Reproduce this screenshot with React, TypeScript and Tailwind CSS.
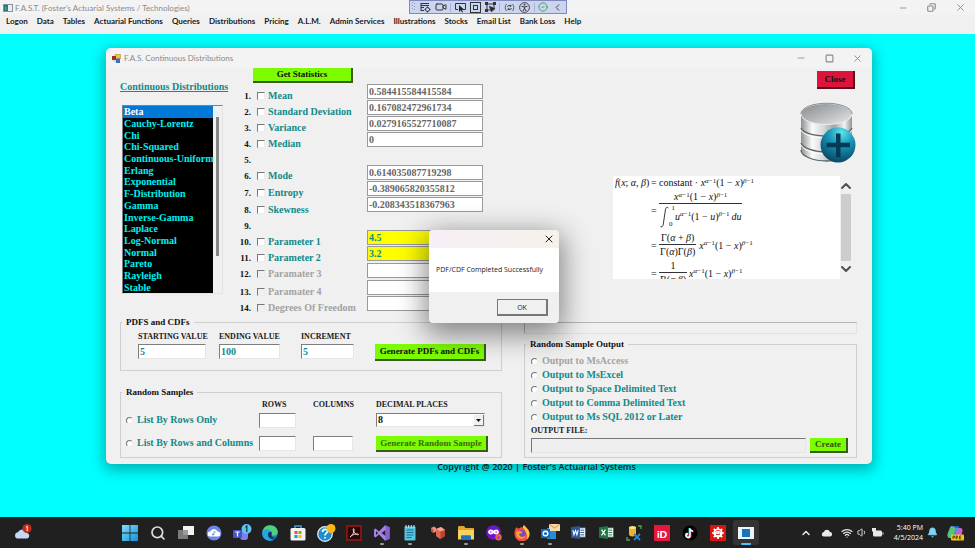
import React from "react";
import {
  Bell,
  ChevronLeft,
  ChevronUp,
  ChevronDown,
  CircleCheck,
  Copy,
  Minus,
  MousePointer2,
  Search,
  Square,
  Video,
  Volume1,
  Wifi,
  X,
} from "lucide-react";

const menuItems = [
  "Logon",
  "Data",
  "Tables",
  "Actuarial Functions",
  "Queries",
  "Distributions",
  "Pricing",
  "A.L.M.",
  "Admin Services",
  "Illustrations",
  "Stocks",
  "Email List",
  "Bank Loss",
  "Help",
];

const distributions = [
  "Beta",
  "Cauchy-Lorentz",
  "Chi",
  "Chi-Squared",
  "Continuous-Uniform",
  "Erlang",
  "Exponential",
  "F-Distribution",
  "Gamma",
  "Inverse-Gamma",
  "Laplace",
  "Log-Normal",
  "Normal",
  "Pareto",
  "Rayleigh",
  "Stable",
];

type Stat = { label?: string; value?: string; kind?: "result" | "param" | "off" };

const stats: Stat[] = [
  { label: "Mean", value: "0.584415584415584", kind: "result" },
  { label: "Standard Deviation", value: "0.167082472961734", kind: "result" },
  { label: "Variance", value: "0.0279165527710087", kind: "result" },
  { label: "Median", value: "0", kind: "result" },
  {},
  { label: "Mode", value: "0.614035087719298", kind: "result" },
  { label: "Entropy", value: "-0.389065820355812", kind: "result" },
  { label: "Skewness", value: "-0.208343518367963", kind: "result" },
  {},
  { label: "Parameter 1", value: "4.5", kind: "param" },
  { label: "Parameter 2", value: "3.2", kind: "param" },
  { label: "Paramater 3", value: "", kind: "off" },
  { label: "Paramater 4", value: "", kind: "off" },
  { label: "Degrees Of Freedom", value: "", kind: "off" },
];

const outputs = [
  "Output to MsAccess",
  "Output to MsExcel",
  "Output to Space Delimited Text",
  "Output to Comma Delimited Text",
  "Output to Ms SQL 2012 or Later",
];

const serif = "font-['Liberation_Serif',serif] font-bold";
const sans = "font-['Open_Sans',sans-serif]";
const chrome = "font-['Lato','Open_Sans',sans-serif]";
const raised = "border-r-2 border-b-2 border-[#3d5a1e] bg-[#7cfc00]";
const sunken =
  "border border-t-[#7d7d7d] border-l-[#7d7d7d] border-r-[#e6e6e6] border-b-[#e6e6e6] bg-white";
const caption = "text-[8px] leading-[10px] whitespace-nowrap text-[#1a1a1a]";

function Radio({ id, name, label, disabled }: { id: string; name: string; label: string; disabled?: boolean }) {
  return (
    <div className="flex h-[14px] items-center gap-[4px]">
      <input
        id={id}
        type="radio"
        name={name}
        disabled={disabled}
        className="size-[7px] shrink-0 appearance-none rounded-full border border-t-[#777] border-l-[#777] border-r-[#eee] border-b-[#eee] bg-white"
      />
      <label
        htmlFor={id}
        className={`text-[10px] leading-[14px] whitespace-nowrap ${disabled ? "text-[#a3a3a3]" : "text-[#108a8a]"}`}
      >
        {label}
      </label>
    </div>
  );
}

function AppGlyph() {
  return (
    <svg viewBox="0 0 10 8" className="h-[8px] w-[10px]" aria-hidden="true">
      <rect x=".5" y=".5" width="9" height="7" fill="#e9eef0" stroke="#8b9296" />
      <rect x="1" y="1" width="4" height="6" fill="#2b6f86" />
      <rect x="2" y="2.500" width="2" height="3.500" fill="#38a86b" />
    </svg>
  );
}

function FormGlyph() {
  return (
    <svg viewBox="0 0 9 9" className="size-[9px]" aria-hidden="true">
      <rect x="3" y="0.300" width="5.500" height="4.700" fill="#f3c437" stroke="#b28a2b" strokeWidth=".5" />
      <rect x="0" y="2" width="4" height="4" fill="#a42b2b" />
      <rect x="4" y="4.500" width="4" height="4.500" fill="#3d6ec9" />
      <rect x="1" y="6" width="3" height="2" fill="#d9d9d9" />
    </svg>
  );
}

function DatabaseArt() {
  return (
    <svg viewBox="0 0 56 62" className="h-[62px] w-[56px]" role="img" aria-label="Add database">
      <defs>
        <linearGradient id="metal" x1="0" x2="1">
          <stop offset="0" stopColor="#8d9191" />
          <stop offset=".22" stopColor="#fafbfb" />
          <stop offset=".45" stopColor="#d2d6d6" />
          <stop offset=".65" stopColor="#9fa5a5" />
          <stop offset=".85" stopColor="#f2f4f4" />
          <stop offset="1" stopColor="#8f9595" />
        </linearGradient>
        <linearGradient id="lid" x1="0" x2="1" y1="0" y2="1">
          <stop offset="0" stopColor="#85898c" />
          <stop offset="1" stopColor="#e6e8e9" />
        </linearGradient>
        <radialGradient id="orb" cx=".6" cy=".15" r=".9">
          <stop offset="0" stopColor="#5fe3ee" />
          <stop offset=".4" stopColor="#1a98b8" />
          <stop offset="1" stopColor="#05405f" />
        </radialGradient>
      </defs>
      <path d="M1 11v37c0 6 12 11 26 11s25-5 25-11V11z" fill="url(#metal)" />
      <path d="M1 26c2 5 13 8 26 8s23-3 25-8M1 41c2 5 13 9 26 9s23-4 25-9M1 48c0 6 12 11 26 11s25-5 25-11" fill="none" stroke="#5e6467" strokeWidth="1.300" />
      <path d="M1 28c2 5 13 8 26 8s23-3 25-8M1 43c2 5 13 9 26 9s23-4 25-9" fill="none" stroke="#fff" strokeWidth="1" />
      <ellipse cx="26.500" cy="12" rx="25.500" ry="10.500" fill="url(#lid)" stroke="#eceeee" strokeWidth="1" />
      <path d="M1 12C1 6 12 1.300 26.500 1.300S52 6 52 12" fill="none" stroke="#6d7274" strokeWidth=".8" />
      <circle cx="38" cy="43" r="17.500" fill="url(#orb)" />
      <path d="M36 31.500h4.500v9.200H50v4.600h-9.500v10H36v-10h-9.500v-4.600H36z" fill="#063b56" />
    </svg>
  );
}

function Beta({ v = "x" }: { v?: string }) {
  return (
    <span className="whitespace-nowrap">
      <i>{v}</i>
      <sup className="text-[7px]"><i>α</i>−1</sup>(1 − <i>{v}</i>)<sup className="text-[7px]"><i>β</i>−1</sup>
    </span>
  );
}

function Fraction({ top, bottom }: { top: React.ReactNode; bottom: React.ReactNode }) {
  return (
    <span className="inline-flex flex-col items-center">
      <span className="px-[2px] leading-[12px]">{top}</span>
      <span className="flex items-center justify-center self-stretch border-t border-[#333] px-[1px] leading-[13px]">{bottom}</span>
    </span>
  );
}

function Formula() {
  return (
    <div className="flex h-[103px]">
      <div className="grid min-w-0 flex-1 grid-cols-[34px_6px_1fr] content-start items-center gap-x-[2px] overflow-hidden bg-white pl-[2px] font-['Liberation_Serif',serif] text-[10px] leading-[13px] font-normal text-[#111]">
        <span className="whitespace-nowrap"><i>f</i>(<i>x</i>; <i>α</i>, <i>β</i>)</span>
        <span>=</span>
        <span className="whitespace-nowrap">constant · <Beta /></span>
        <span className="col-start-2">=</span>
        <span className="flex h-[42px] items-start pt-[2px]">
          <Fraction
            top={<Beta />}
            bottom={
              <span className="flex items-center">
                <svg viewBox="0 0 9 22" className="mt-[2px] h-[22px] w-[9px]" aria-hidden="true">
                  <path d="M8.300 2.200C7.500.6 6 .8 5.400 4L3.300 18c-.5 3.200-2 3.700-2.800 2" fill="none" stroke="#222" strokeWidth=".9" />
                </svg>
                <span className="flex h-[24px] w-[6px] flex-col justify-between text-[7px] leading-[8px]">
                  <span className="text-right">1</span>
                  <span>0</span>
                </span>
                <Beta v="u" />
                <i className="ml-[2px]">du</i>
              </span>
            }
          />
        </span>
        <span className="col-start-2">=</span>
        <span className="flex h-[28px] items-center gap-[3px]">
          <Fraction top={<>Γ(<i>α</i> + <i>β</i>)</>} bottom={<>Γ(<i>α</i>)Γ(<i>β</i>)</>} />
          <Beta />
        </span>
        <span className="col-start-2">=</span>
        <span className="flex h-[28px] items-center gap-[2px]">
          <Fraction top="1" bottom={<>B(<i>α</i>, <i>β</i>)</>} />
          <Beta />
        </span>
      </div>
      <div className="flex w-[12px] flex-col items-center justify-between py-[2px] text-[#505050]">
        <ChevronUp size={16} strokeWidth={3} className="shrink-0" />
        <div className="w-[10px] flex-1 bg-[#cdcdcd]" />
        <ChevronDown size={16} strokeWidth={3} className="shrink-0" />
      </div>
    </div>
  );
}

function DebugToolbar() {
  const sep = <span className="h-[9px] w-px bg-[#a9b1d6]" />;
  return (
    <div className="absolute top-0 left-[409px] flex h-[14px] w-[158px] items-center justify-between border border-[#7f89bd] bg-[#ccd5f0] pr-[3px] pl-[2px] text-[#333]">
      <svg viewBox="0 0 4 10" className="h-[10px] w-[4px]" fill="#8d95b8" aria-hidden="true">
        <path d="M0 0h1v1H0zM2 1h1v1H2zM0 3h1v1H0zM2 4h1v1H2zM0 6h1v1H0zM2 7h1v1H2z" />
      </svg>
      <svg viewBox="0 0 11 11" className="size-[11px]" fill="none" stroke="#333" aria-hidden="true">
        <path d="M1 1.500h8M1 3.500h8M1 5.500h3M1 8.500h3M1 1v8" />
        <circle cx="7.500" cy="7.500" r="2" />
        <path d="M7.500 4.500v1M7.500 9.500v1M4.500 7.500h1M9.500 7.500h1" />
      </svg>
      <Video size={12} strokeWidth={2} />
      {sep}
      <svg viewBox="0 0 11 11" className="size-[11px]" aria-hidden="true">
        <path d="M3 7.500H.5v-6h10v6H8" fill="none" stroke="#333" />
        <path d="M4 3v7l1.800-1.800L7 10.500l1-.6-1.100-2L9 7.500z" fill="#222" />
      </svg>
      <svg viewBox="0 0 11 11" className="size-[11px]" fill="none" stroke="#333" aria-hidden="true">
        <rect x=".5" y=".5" width="10" height="10" />
        <rect x="3.500" y="3.500" width="4" height="4" />
      </svg>
      <span className="relative">
        <svg viewBox="0 0 11 11" className="size-[11px]" fill="none" stroke="#333" aria-hidden="true">
          <path d="M2 2h7M2 2v6M9 2v6M2 8h7" />
          <path d="M0 0h3v3H0zM8 0h3v3H8zM0 7h3v3H0z" fill="#333" stroke="none" />
        </svg>
        <MousePointer2 size={8} className="absolute top-[3px] left-[3px]" fill="#222" />
      </span>
      {sep}
      <svg viewBox="0 0 11 11" className="size-[11px]" fill="none" stroke="#444" aria-hidden="true">
        <path d="M2.500 2C.8 4 .8 7 2.500 9M8.500 2c1.700 2 1.700 5 0 7" strokeWidth=".8" />
        <path d="M3.500 5a2 2 0 0 1 3.500-1M7.500 6A2 2 0 0 1 4 7M7 2.800V4.300H5.500M4 8.200V6.700h1.500" strokeWidth=".9" />
      </svg>
      <svg viewBox="0 0 11 11" className="size-[11px]" fill="none" stroke="#333" aria-hidden="true">
        <circle cx="5.500" cy="5.500" r="4.900" strokeWidth=".9" />
        <circle cx="5.500" cy="2.700" r=".9" fill="#333" stroke="none" />
        <path d="M2.500 4.300l3 .7 3-.7M5.500 5v1.500M4 9l1.500-2.800L7 9" strokeWidth="1" />
      </svg>
      {sep}
      <CircleCheck size={10} className="text-[#2f9e3d]" />
      <ChevronLeft size={11} />
    </div>
  );
}

const tile = "size-[16px]";

const apps: { name: string; running?: boolean; active?: boolean; art: React.ReactNode }[] = [
  {
    name: "Start",
    art: (
      <svg viewBox="0 0 16 16" className={tile}>
        <defs>
          <linearGradient id="start" x1="0" y1="0" x2="1" y2="1">
            <stop offset="0" stopColor="#7fdcfb" />
            <stop offset="1" stopColor="#1492dc" />
          </linearGradient>
        </defs>
        <path d="M0 0h7.600v7.600H0zM8.400 0H16v7.600H8.400zM0 8.400h7.600V16H0zM8.400 8.400H16V16H8.400z" fill="url(#start)" />
      </svg>
    ),
  },
  { name: "Search", art: <Search size={16} strokeWidth={2.5} className="text-[#dedede]" /> },
  {
    name: "Task View",
    art: (
      <svg viewBox="0 0 16 16" className={tile}>
        <path d="M5 1h11v9H5z" fill="#f1f1f1" />
        <path d="M0 5h10v9H0z" fill="#8c8c8c" fillOpacity=".85" />
      </svg>
    ),
  },
  {
    name: "Cloud Music",
    art: (
      <svg viewBox="0 0 16 16" className={tile}>
        <circle cx="8" cy="8" r="7.500" fill="#6a86e6" />
        <path d="M4 11.500a2.500 2.500 0 0 1 .3-5 3.800 3.800 0 0 1 7.200 0 2.500 2.500 0 0 1 .5 5z" fill="#fff" />
        <circle cx="7" cy="9.500" r="1" fill="#6a86e6" />
        <path d="M8 9.500v-3l1.500.5" fill="none" stroke="#6a86e6" strokeWidth=".8" />
      </svg>
    ),
  },
  {
    name: "Teams",
    art: (
      <svg viewBox="0 0 19 17" className="h-[17px] w-[19px]">
        <rect x="7" y="7" width="8" height="9" rx="3" fill="#7b83eb" />
        <circle cx="13.500" cy="5" r="5" fill="#5cc3f2" />
        <path d="M12.500 3.200 13.800 2v6" fill="none" stroke="#1d2a3a" strokeWidth="1.200" />
        <rect x="0" y="6" width="9" height="8" rx="1" fill="#4a55c4" />
        <path d="M2.300 8h4.400M4.500 8v4.500" stroke="#fff" strokeWidth="1.200" />
      </svg>
    ),
  },
  {
    name: "Edge",
    art: (
      <svg viewBox="0 0 16 16" className={tile}>
        <circle cx="8" cy="8" r="7.800" fill="#1477c9" />
        <path d="M.3 7.500C1 3 4 .2 8 .2c5 0 8 3.600 7.800 6.800-.1 2.500-2 3.800-4 3.800-1.800 0-2.400-.8-1.900-1.700C11 6.500 6 2.800.3 7.500z" fill="#4fd07c" />
        <path d="M.3 7.500C2 3 8 3.500 9.500 7 6.500 6 5 9 6.500 12c1 2 3.500 3 6 2.500C5 18-.8 13 .3 7.500z" fill="#2aa4dc" />
        <path d="M9.500 7C6.500 6.400 5.400 9 6.500 11.500c1.400 2.700 5 3.200 7.600 1.300-2.500.6-5.300-.6-4.700-3z" fill="#12355c" />
      </svg>
    ),
  },
  {
    name: "Store",
    art: (
      <svg viewBox="0 0 16 16" className={tile}>
        <path d="M5 4V1h6v3" fill="none" stroke="#3aa0e0" strokeWidth="1.500" />
        <rect x=".5" y="3" width="15" height="12.500" rx="1.500" fill="#f3f3f3" />
        <path d="M4.500 6h3v3h-3z" fill="#f25022" />
        <path d="M8.500 6h3v3h-3z" fill="#7fba00" />
        <path d="M4.500 10h3v3h-3z" fill="#00a4ef" />
        <path d="M8.500 10h3v3h-3z" fill="#ffb900" />
      </svg>
    ),
  },
  {
    name: "Get Help",
    art: (
      <svg viewBox="0 0 19 18" className="h-[18px] w-[19px]">
        <circle cx="8" cy="10" r="7.300" fill="#1e8fd0" stroke="#e9f4fa" strokeWidth="1.200" />
        <path d="M5.500 8c0-3.500 5-3.300 5-.6C10.500 9.200 8 9.300 8 11.500M8 13v1.600" fill="none" stroke="#fff" strokeWidth="1.700" />
        <circle cx="14" cy="4.500" r="4.500" fill="#fdb913" />
      </svg>
    ),
  },
  {
    name: "Acrobat",
    art: (
      <svg viewBox="0 0 16 16" className={tile}>
        <rect x="1" y="1" width="14" height="14" fill="#2b0606" stroke="#a01515" strokeWidth="1.500" />
        <path d="M4 12c1-.5 4.500-4 4-8-.5-1-1.200 0-.5 2C8.500 9 12 10.500 12.500 9.500S7 8.500 4 12z" fill="none" stroke="#f4eaea" strokeWidth=".9" />
      </svg>
    ),
  },
  {
    name: "Visual Studio",
    running: true,
    art: (
      <svg viewBox="0 0 16 16" className={tile}>
        <path d="M1.500 3.500 0 4.500v7l1.500 1L5 9.400l6 6.400 4.500-2V2.200L11 .2 5 6.600zM2 6l2 2-2 2zM11.500 5v6L7.500 8z" fill="#a583e8" fillRule="evenodd" />
        <path d="M11.500.4 15.500 2.200v11.600l-4 1.800z" fill="#8560d0" />
      </svg>
    ),
  },
  {
    name: "Notepad",
    running: true,
    art: (
      <svg viewBox="0 0 16 16" className={tile}>
        <rect x="2.500" y="1.500" width="11" height="14" rx="1" fill="#59c2e0" />
        <path d="M4.500 5h7M4.500 7.500h7M4.500 10h7M4.500 12.500h5" stroke="#1c6f90" strokeWidth="1" />
        <path d="M4 0v3M6.700 0v3M9.300 0v3M12 0v3" stroke="#cfeef7" strokeWidth="1" />
      </svg>
    ),
  },
  {
    name: "Package",
    art: (
      <svg viewBox="0 0 16 16" className={tile}>
        <path d="m6 4 5-2 4 3v6l-5 3-4-3z" fill="#e2674f" />
        <path d="m6 4 4.500 2.500L15 5l-4-3z" fill="#f5a48f" />
        <path d="M10.500 6.500V14l4.500-3V5z" fill="#b94432" />
        <path d="m1 3 3-1.500L6 3v3.500L3.500 8 1 6z" fill="#ef937c" />
        <path d="M3.500 4.500V8L1 6V3z" fill="#c75340" />
      </svg>
    ),
  },
  {
    name: "File Explorer",
    running: true,
    art: (
      <svg viewBox="0 0 16 16" className={tile}>
        <path d="M0 2.500C0 1.500.5 1 1.500 1H6l1.500 2H15c.7 0 1 .4 1 1v10H0z" fill="#e5a52a" />
        <path d="M0 5h16v9.500H0z" fill="#fbd35c" />
        <path d="M3 15v-3.500c0-.8.500-1.200 1.200-1.200h7.600c.7 0 1.200.4 1.200 1.200V15z" fill="#1b74c9" />
      </svg>
    ),
  },
  {
    name: "Firefox Private",
    art: (
      <svg viewBox="0 0 16 16" className={tile}>
        <circle cx="7.500" cy="7.500" r="7.300" fill="#7414c9" />
        <path d="M3 7c0-2 3-2 4.500 0s4.500 2 4.500 0-3-2-4.500 0S3 9 3 7z" fill="none" stroke="#fff" strokeWidth="1.800" />
        <circle cx="12.500" cy="12.200" r="3.200" fill="#f2662b" />
        <circle cx="12.500" cy="12.600" r="1.500" fill="#9a3fd8" />
      </svg>
    ),
  },
  {
    name: "Firefox",
    running: true,
    art: (
      <svg viewBox="0 0 16 16" className={tile}>
        <path d="M1 5c.5-1.500 1-2 1.500-3 .7 1 1.500 1.500 2.500 1.500C6.500 2 8 2 9 2.500 9 1.500 9.500.5 10 0c1 2 5.500 4 5.500 9A7.500 7.500 0 0 1 .5 9C.4 7.500.6 6 1 5z" fill="#f4503b" />
        <path d="M10 0c1 2 5.500 4 5.500 9 0 2-1 4-2.500 5.200C14 9 11 5.500 9 2.500 9 1.500 9.500.5 10 0z" fill="#ffc53a" />
        <circle cx="7.800" cy="9" r="4" fill="#7b45cc" />
        <path d="M2.500 6.500C5 5.500 8 6 8.500 8 7 8 6.500 9 5 9.200 5.500 12 10 13 12 10c0 4-7 5.500-9.200 1.200C2 9.500 2 8 2.500 6.500z" fill="#ff9a2e" />
      </svg>
    ),
  },
  {
    name: "Outlook",
    running: true,
    art: (
      <svg viewBox="0 0 19 17" className="h-[17px] w-[19px]">
        <rect x="6" y="4" width="9" height="11" fill="#2a8ad6" />
        <path d="M8 0h11v7H8z" fill="#f7d9ae" />
        <path d="m8 0 5.500 4L19 0" fill="none" stroke="#d48d3a" strokeWidth="1" />
        <rect x="0" y="5" width="9" height="9" fill="#0f6cbd" />
        <circle cx="4.500" cy="9.500" r="2.300" fill="none" stroke="#fff" strokeWidth="1.400" />
      </svg>
    ),
  },
  {
    name: "Word",
    art: (
      <svg viewBox="0 0 16 16" className="size-[15px]">
        <path d="M8 3h7.500v10H8z" fill="#f0f4fa" stroke="#2b579a" strokeWidth=".8" />
        <path d="M10 5.500h4M10 8h4M10 10.500h4" stroke="#2b579a" />
        <path d="M0 2.500 9.500 1v14L0 13.500z" fill="#2b579a" />
        <path d="m2 5.500 1.200 5L4.800 6l1.500 4.500 1.300-5" fill="none" stroke="#fff" strokeWidth="1.200" />
      </svg>
    ),
  },
  {
    name: "Excel",
    art: (
      <svg viewBox="0 0 16 16" className="size-[15px]">
        <path d="M8 3h7.500v10H8z" fill="#f0faf4" stroke="#217346" strokeWidth=".8" />
        <path d="M10 5.500h4M10 8h4M10 10.500h4" stroke="#217346" />
        <path d="M0 2.500 9.500 1v14L0 13.500z" fill="#217346" />
        <path d="m2.700 5 4.200 6M6.900 5l-4.200 6" stroke="#fff" strokeWidth="1.300" />
      </svg>
    ),
  },
  {
    name: "SQL Tools",
    art: (
      <svg viewBox="0 0 16 16" className={tile}>
        <path d="M3 2.500v7c0 2.500 7 2.500 7 0v-7z" fill="#f0b429" />
        <ellipse cx="6.500" cy="2.500" rx="3.500" ry="1.500" fill="#ffe08a" />
        <path d="M12 1h3v3M4 15H1v-3" fill="none" stroke="#56a944" strokeWidth="1.300" />
        <path d="m8 9 6 6M14 9l-6 6" stroke="#2d86cf" strokeWidth="1.800" />
      </svg>
    ),
  },
  {
    name: "iD",
    art: (
      <span className="flex size-[16px] items-end justify-center bg-[#e5173f] font-['Lato',sans-serif] text-[10px] leading-[14px] font-black text-white">
        iD
      </span>
    ),
  },
  {
    name: "TikTok",
    art: (
      <svg viewBox="0 0 16 16" className={tile}>
        <circle cx="8" cy="8" r="7.500" fill="#000" />
        <path d="M8 3.500v7a1.900 1.900 0 1 1-2-1.800M8 3.500c.3 1.700 1.300 2.600 3 2.700" fill="none" stroke="#25f4ee" strokeWidth="1.600" transform="translate(-.6 -.4)" />
        <path d="M8 3.500v7a1.900 1.900 0 1 1-2-1.800M8 3.500c.3 1.700 1.300 2.600 3 2.700" fill="none" stroke="#fe2c55" strokeWidth="1.600" transform="translate(.6 .4)" />
        <path d="M8 3.500v7a1.900 1.900 0 1 1-2-1.800M8 3.500c.3 1.700 1.300 2.600 3 2.700" fill="none" stroke="#fff" strokeWidth="1.400" />
      </svg>
    ),
  },
  {
    name: "Settings Utility",
    art: (
      <svg viewBox="0 0 16 16" className={tile}>
        <rect width="16" height="16" fill="#d8160f" />
        <circle cx="8" cy="8" r="4.600" fill="#fff" />
        <path d="M8 2v12M2 8h12M3.800 3.800l8.400 8.400M12.200 3.800l-8.400 8.400" stroke="#fff" strokeWidth="1.700" />
        <path d="M5.500 6.500c1-1.500 4-1.500 5 0M6 9.500h4M6.500 8h.8M9 8h.8" fill="none" stroke="#d8160f" strokeWidth=".8" />
      </svg>
    ),
  },
  {
    name: "F.A.S.T.",
    active: true,
    art: (
      <svg viewBox="0 0 16 12" className="h-[12px] w-[16px]">
        <rect width="16" height="12" fill="#eef3f7" />
        <rect x="4" y="2" width="8" height="8" fill="#1673bd" />
      </svg>
    ),
  },
];

function Taskbar() {
  return (
    <footer className={`${sans} flex h-[31px] shrink-0 items-center bg-[#202020] text-white`}>
      <button aria-label="Weather" className="relative ml-[14px] flex w-[19px] items-center">
        <svg viewBox="0 0 19 17" className="h-[17px] w-[19px]">
          <path d="M3.500 14.500a3.200 3.200 0 0 1 .4-6.300 5 5 0 0 1 9.200.8 2.900 2.900 0 0 1 .4 5.500z" fill="#c4d7f5" />
          <circle cx="13" cy="4.500" r="4.500" fill="#c42b1c" />
          <path d="M12 3.200 13.200 2.200v5" fill="none" stroke="#fff" />
        </svg>
      </button>
      <nav aria-label="Pinned apps" className="ml-[83px] flex h-full">
        {apps.map((a) => (
          <button key={a.name} aria-label={a.name} className="relative flex h-full w-[28px] items-center justify-center py-[3px]">
            <span className={`flex h-full w-[26px] items-center justify-center rounded-[3px] ${a.active ? "bg-[#343434]" : ""}`}>{a.art}</span>
            {a.running && <span className="absolute bottom-[3px] h-[2px] w-[4px] rounded-full bg-[#9a9a9a]" />}
            {a.active && <span className="absolute bottom-[3px] h-[2px] w-[10px] rounded-full bg-[#4cc2ff]" />}
          </button>
        ))}
      </nav>
      <div className="ml-auto flex items-center pr-[11px] text-[#e8e8e8]">
        <ChevronUp size={12} strokeWidth={3} />
        <svg viewBox="0 0 12 8" className="ml-[9px] h-[8px] w-[12px]" aria-hidden="true">
          <path d="M2.500 7.500a2.300 2.300 0 0 1 .3-4.500A3.300 3.300 0 0 1 9 3a2.300 2.300 0 0 1 .5 4.500z" fill="#e8e8e8" />
        </svg>
        <Wifi size={12} strokeWidth={2.5} className="ml-[8px]" />
        <Volume1 size={11} className="ml-[4px]" />
        <svg viewBox="0 0 12 10" className="ml-[4px] h-[10px] w-[12px]" aria-hidden="true">
          <rect x="1" y="2.500" width="9" height="6" rx="1.500" fill="#e8e8e8" />
          <path d="M10.500 4.500h1v2h-1zM0 0h4v3L2 5 0 3z" fill="#e8e8e8" />
        </svg>
        <div className="ml-[10px] text-right text-[7px] leading-[10px] whitespace-nowrap text-white">
          <div>5:40 PM</div>
          <div>4/5/2024</div>
        </div>
        <Bell size={11} fill="#7fd4f5" className="ml-[4px] text-[#7fd4f5]" />
        <svg viewBox="0 0 17 16" className="ml-[9px] h-[16px] w-[17px]" role="img" aria-label="Copilot">
          <path d="M5 1h5c1.500 0 2 1 2.300 2L11 5 7 11l-1 2H3C1 13 0 11 1 8l2-5c.5-1.300 1-2 2-2z" fill="#27a3e0" />
          <path d="M5 1h4L7 8l-1 5H3C1 13 0 11 1 8l2-5c.5-1.300 1-2 2-2z" fill="#5fc06b" />
          <path d="M11 3h2c2.500 0 3 2 2.300 4L14 11H8l1.500-5z" fill="#c062d6" />
          <path d="M5 1h5c1.500 0 2 1 2.300 2H9z" fill="#1d62d2" />
          <rect x="4" y="9.500" width="13" height="6" rx="1" fill="#f7c325" />
          <path d="M6 14v-3h1.500v1.500H6M9 14v-3h1.500v1.300L9 12.500l1.500 1.500M14.500 11h-2v3h2M12.500 12.500h1.500" fill="none" stroke="#3b2d00" strokeWidth=".7" />
        </svg>
      </div>
    </footer>
  );
}

function MessageBox() {
  return (
    <div
      role="dialog"
      aria-label="Message"
      className={`${sans} absolute top-[182px] right-[313px] w-[130px] overflow-hidden rounded-[4px] bg-[#f0f0f0] text-[7px] text-[#222] shadow-[0_8px_28px_4px_rgba(0,0,0,0.45)]`}
    >
      <div className="flex h-[18px] items-center justify-end bg-linear-to-r from-[#f6eff6] to-[#f5f2ea] pr-[4px]">
        <button aria-label="Close message"><X size={12} strokeWidth={2} /></button>
      </div>
      <p className="bg-white px-[7px] py-[17px] leading-[10px] whitespace-nowrap">PDF/CDF Completed Successfully</p>
      <div className="flex justify-end px-[11px] pt-[7px] pb-[7px]">
        <button className="h-[17px] w-[51px] border border-r-2 border-b-2 border-[#777] bg-[#f0f0f0] leading-[13px]">OK</button>
      </div>
    </div>
  );
}

function StatsForm() {
  return (
    <div className="flex">
      <div className="w-[111px] shrink-0 pt-[13px]">
        <h2 className="text-[10px] leading-[12px] whitespace-nowrap text-[#108a8a] underline">Continuous Distributions</h2>
        <div className="mt-[12px] ml-[2px] flex h-[189px] w-[101px] border border-t-[#808080] border-l-[#808080] border-r-[#e4e4e4] border-b-[#e4e4e4]">
          <ul role="listbox" aria-label="Continuous Distributions" className="flex w-[90px] flex-col bg-black">
            {distributions.map((d, i) => (
              <li
                key={d}
                role="option"
                aria-selected={i === 0}
                className={`flex flex-1 items-center pl-px text-[10px] leading-[11px] whitespace-nowrap ${i === 0 ? "bg-[#0078d7] text-white" : "text-[#00f0f0]"}`}
              >
                {d}
              </li>
            ))}
          </ul>
          <div className="flex-1 pt-[11px] pl-[3px]">
            <div className="h-[139px] w-[3px] bg-[#858585]" />
          </div>
        </div>
      </div>

      <div className="ml-[7px] w-[129px] shrink-0">
        <button className={`ml-[15px] block h-[15px] w-[100px] text-[9px] leading-[13px] ${raised}`}>Get Statistics</button>
        <div className="mt-[5px] grid grid-rows-[repeat(6,16px)_18px_repeat(5,16px)_20px_12px]">
          {stats.map((s, i) => (
            <div key={i} className="flex items-center">
              <span className="w-[13px] text-right text-[9px] leading-[12px]">{i + 1}.</span>
              {s.label && (
                <>
                  <input
                    id={`stat-${i}`}
                    type="checkbox"
                    disabled={s.kind === "off"}
                    className={`ml-[6px] size-[8px] shrink-0 appearance-none border border-t-[#777] border-l-[#777] border-r-[#ececec] border-b-[#ececec] ${s.kind === "off" ? "bg-[#f0f0f0]" : "bg-white"}`}
                  />
                  <label
                    htmlFor={`stat-${i}`}
                    className={`ml-[3px] text-[10px] leading-[12px] whitespace-nowrap ${s.kind === "off" ? "text-[#a3a3a3]" : "text-[#108a8a]"}`}
                  >
                    {s.label}
                  </label>
                </>
              )}
            </div>
          ))}
        </div>
      </div>

      <div className="grid w-[116px] shrink-0 grid-rows-[repeat(4,16px)_17px_16px_16px_17px_16px_16px_17px_17px_16px_16px] pt-[16px]">
        {stats.map((s, i) =>
          s.label ? (
            <input
              key={i}
              aria-label={`${s.label} value`}
              defaultValue={s.value}
              className={`h-[15px] w-full border border-[#999] pl-px text-[10px] leading-[13px] ${s.kind === "param" ? "bg-[#ffff00] text-[#108a8a]" : "bg-white text-[#666]"}`}
            />
          ) : (
            <span key={i} />
          ),
        )}
      </div>
    </div>
  );
}

const group = "border border-[#cfcfcf]";
const legend = "ml-[1px] px-[4px] text-[9px] leading-[9px]";

function DistributionsWindow() {
  return (
    <section
      aria-label="F.A.S. Continuous Distributions"
      className="absolute top-[14px] right-[103px] left-[106px] rounded-[5px] bg-[#f0f0f0] shadow-[0_4px_14px_2px_rgba(0,60,60,0.4)]"
    >
      <header className={`${chrome} flex h-[20px] items-center rounded-t-[5px] bg-[#f3f3f3] px-[6px] text-[8px] text-[#8a8a8a]`}>
        <FormGlyph />
        <span className="ml-[3px]">F.A.S. Continuous Distributions</span>
        <div className="ml-auto flex w-[70px] items-center justify-between pr-[3px]">
          <button aria-label="Minimize form"><Minus size={10} /></button>
          <button aria-label="Maximize form"><Square size={9} strokeWidth={3} /></button>
          <button aria-label="Close form"><X size={11} /></button>
        </div>
      </header>

      <div className={`${serif} grid grid-cols-[382fr_333fr] gap-x-[22px] pr-[15px] pb-[6px] pl-[14px] text-[#111]`}>
        <div className="flex min-w-0 flex-col">
          <StatsForm />

          <fieldset className={`${group} mt-[4px] h-[53px]`}>
            <legend className={legend}>PDFS and CDFs</legend>
            <div className="grid grid-cols-[81px_82px_74px_111px] items-start pt-[5px] pl-[17px]">
              <div className="flex flex-col gap-[2px]">
                <label htmlFor="start-value" className={caption}>STARTING VALUE</label>
                <input id="start-value" defaultValue="5" className={`${sunken} h-[15px] w-[68px] pl-px text-[10px] text-[#108a8a]`} />
              </div>
              <div className="flex flex-col gap-[2px]">
                <label htmlFor="end-value" className={caption}>ENDING VALUE</label>
                <input id="end-value" defaultValue="100" className={`${sunken} h-[15px] w-[61px] pl-px text-[10px] text-[#108a8a]`} />
              </div>
              <div className="flex flex-col gap-[2px]">
                <label htmlFor="increment" className={caption}>INCREMENT</label>
                <input id="increment" defaultValue="5" className={`${sunken} h-[15px] w-[53px] pl-px text-[10px] text-[#108a8a]`} />
              </div>
              <button className={`mt-[12px] h-[17px] text-[9px] leading-[15px] whitespace-nowrap ${raised}`}>Generate PDFs and CDFs</button>
            </div>
          </fieldset>

          <fieldset className={`${group} mt-[17px] h-[70px]`}>
            <legend className={legend}>Random Samples</legend>
            <div className="grid grid-cols-[133px_54px_63px_112px] grid-rows-[13px_23px_16px] items-start pt-[3px] pl-[5px]">
              <label htmlFor="rows" className={`${caption} col-start-2 pl-[3px]`}>ROWS</label>
              <label htmlFor="cols" className={caption}>COLUMNS</label>
              <label htmlFor="places" className={caption}>DECIMAL PLACES</label>
              <Radio id="by-rows" name="listing" label="List By Rows Only" />
              <input id="rows" className={`${sunken} h-[15px] w-[37px] text-[10px]`} />
              <div className="relative col-start-4 w-[109px]">
                <select id="places" defaultValue="8" className={`${sunken} block h-[14px] w-full appearance-none pl-px text-[10px] leading-[12px]`}>
                  <option>8</option>
                </select>
                <span className="pointer-events-none absolute top-[2px] right-px flex h-[11px] w-[10px] items-center justify-center border-r border-b border-[#777] bg-[#f0f0f0]">
                  <svg viewBox="0 0 5 3" className="h-[3px] w-[5px]"><path d="M0 0h5L2.500 3z" fill="#111" /></svg>
                </span>
              </div>
              <Radio id="by-both" name="listing" label="List By Rows and Columns" />
              <input aria-label="Rows for rows and columns" className={`${sunken} h-[15px] w-[37px] text-[10px]`} />
              <input id="cols" className={`${sunken} h-[15px] w-[40px] text-[10px]`} />
              <button className={`h-[16px] text-[9px] leading-[14px] whitespace-nowrap text-[#3c6a14] ${raised}`}>Generate Random Sample</button>
            </div>
          </fieldset>
        </div>

        <div className="flex min-w-0 flex-col">
          <button className="mt-[3px] mr-[2px] h-[18px] w-[38px] self-end border-r-2 border-b-2 border-[#5a1020] bg-[#dc143c] text-[9px] leading-[16px]">
            Close
          </button>
          <div className="mt-[13px] mr-px self-end"><DatabaseArt /></div>
          <div className="mt-[12px] mr-[5px] ml-[89px]"><Formula /></div>
          <div className="mt-[43px] h-[12px] border border-t-[#b4b4b4] border-l-[#b4b4b4] border-r-[#e2e2e2] border-b-[#e2e2e2]" />
          <fieldset className={`${group} mt-auto h-[118px]`}>
            <legend className={legend}>Random Sample Output</legend>
            <div className="pt-[5px] pr-[8px] pl-[6px]">
              {outputs.map((o, i) => (
                <Radio key={o} id={`out-${i}`} name="output" label={o} disabled={i === 0} />
              ))}
              <label htmlFor="file" className={`${caption} mt-[2px] block`}>OUTPUT FILE:</label>
              <div className="mt-[2px] flex gap-[4px]">
                <input id="file" className="h-[15px] min-w-0 flex-1 border border-t-[#777] border-l-[#777] border-r-[#e6e6e6] border-b-[#e6e6e6] bg-[#efefef] text-[10px]" />
                <button className={`h-[15px] w-[38px] text-[9px] leading-[13px] text-[#2f5410] ${raised}`}>Create</button>
              </div>
            </div>
          </fieldset>
        </div>
      </div>

      <MessageBox />
    </section>
  );
}

export default function App() {
  return (
    <div className="flex min-h-screen flex-col overflow-hidden bg-[#f0f0f0]">
      <header className={`${chrome} relative flex h-[15px] items-center bg-[#f3f3f3] px-[3px] text-[8px] text-[#8a8a8a]`}>
        <AppGlyph />
        <span className="ml-[2px] whitespace-nowrap">F.A.S.T. (Foster's Actuarial Systems / Technologies)</span>
        <DebugToolbar />
        <div className="ml-auto flex w-[74px] items-center justify-between pr-[6px]">
          <button aria-label="Minimize"><Minus size={10} /></button>
          <button aria-label="Restore"><Copy size={9} strokeWidth={3} className="-scale-x-100" /></button>
          <button aria-label="Close"><X size={11} /></button>
        </div>
      </header>
      <nav aria-label="Main menu" className={`${chrome} flex h-[19px] items-start gap-[9px] pl-[6px] text-[8px] leading-[12px] font-bold text-[#1a1a1a]`}>
        {menuItems.map((m) => (
          <button key={m} className="whitespace-nowrap">{m}</button>
        ))}
      </nav>
      <main className="relative flex min-h-[483px] flex-1 flex-col justify-end bg-[#00ffff]">
        <p className={`${sans} pb-[43px] pl-[98px] text-center text-[9px] leading-[14px] font-semibold text-[#111]`}>
          Copyright @ 2020 | Foster's Actuarial Systems
        </p>
        <DistributionsWindow />
      </main>
      <Taskbar />
    </div>
  );
}
